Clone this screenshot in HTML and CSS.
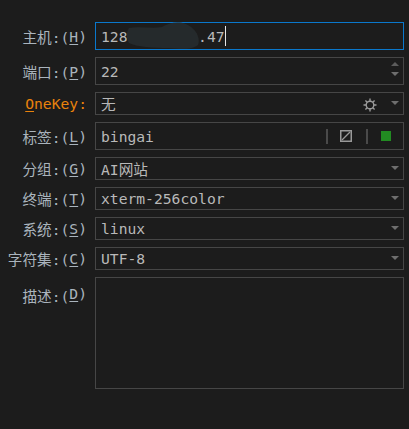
FILE: index.html
```html
<!DOCTYPE html>
<html lang="en">
<head>
    <meta charset="UTF-8">
    <meta name="viewport" content="width=device-width, initial-scale=1.0">
    <title>Session</title>
    <link rel="stylesheet" href="styles.css">
</head>
<body>
    <form class="form">
        <label class="label">主机:(<u>H</u>)</label>
        <div class="field tall focus">
            <span class="value">128.<span class="hidden-part">0000000</span>.47</span><span class="caret"></span>
            <svg class="smear" width="74" height="28" viewBox="0 0 74 28">
                <path d="M3 6 C14 4 26 7 36 5 C42 1 52 -1 60 2 C69 6 75 15 72 23 C66 28 54 27 42 26 C28 26 10 25 3 21 C0 17 0 10 3 6 Z" fill="#252a2c"/>
            </svg>
        </div>

        <label class="label">端口:(<u>P</u>)</label>
        <div class="field tall">
            <span class="value">22</span>
            <span class="spin">
                <span class="arrow up"></span>
                <span class="arrow"></span>
            </span>
        </div>

        <label class="label key"><u>O</u>neKey:</label>
        <div class="field">
            <span class="value">无</span>
            <svg class="gear" width="14" height="14" viewBox="0 0 14 14">
                <circle cx="7" cy="7" r="3.8" fill="none" stroke="#9a9a9a" stroke-width="1.4"/>
                <path d="M7 0.5V3M7 11V13.5M0.5 7H3M11 7H13.5M2.4 2.4L4.2 4.2M9.8 9.8L11.6 11.6M11.6 2.4L9.8 4.2M4.2 9.8L2.4 11.6" stroke="#9a9a9a" stroke-width="1.4"/>
            </svg>
            <span class="arrow"></span>
        </div>

        <label class="label">标签:(<u>L</u>)</label>
        <div class="field tall">
            <span class="value">bingai</span>
            <span class="sep first"></span>
            <svg class="clear" width="12" height="12" viewBox="0 0 12 12">
                <rect x="0.75" y="0.75" width="10.5" height="10.5" fill="none" stroke="#999" stroke-width="1.5"/>
                <path d="M2 10L10 2" stroke="#999" stroke-width="1.3"/>
            </svg>
            <span class="sep"></span>
            <span class="swatch"></span>
        </div>

        <label class="label">分组:(<u>G</u>)</label>
        <div class="field">
            <span class="value">AI网站</span>
            <span class="arrow"></span>
        </div>

        <label class="label">终端:(<u>T</u>)</label>
        <div class="field">
            <span class="value">xterm-256color</span>
            <span class="arrow"></span>
        </div>

        <label class="label">系统:(<u>S</u>)</label>
        <div class="field">
            <span class="value">linux</span>
            <span class="arrow"></span>
        </div>

        <label class="label">字符集:(<u>C</u>)</label>
        <div class="field">
            <span class="value">UTF-8</span>
            <span class="arrow"></span>
        </div>

        <label class="label desc">描述:(<u>D</u>)</label>
        <div class="field area"></div>
    </form>
</body>
</html>
```

FILE: styles.css
```css
body {
    margin: 0;
    background-color: #1c1c1c;
    font-family: "DejaVu Sans Mono", "Noto Sans CJK SC", monospace;
    font-size: 14.67px;
    color: #b9b9b9;
}
.form {
    display: grid;
    grid-template-columns: 87px 309px;
    column-gap: 8px;
    row-gap: 7px;
    padding-top: 22px;
}
.label {
    display: flex;
    align-items: center;
    justify-content: flex-end;
    white-space: pre;
    color: #aab4bd;
}
.label u {
    text-underline-offset: 2px;
}
.key {
    color: #e8820c;
}
.desc {
    align-items: flex-start;
    padding-top: 8px;
}
.field {
    position: relative;
    box-sizing: border-box;
    height: 23px;
    display: flex;
    align-items: center;
    padding: 0 4px 0 5px;
    border: 1px solid #464646;
}
.tall {
    height: 28px;
}
.focus {
    border-color: #0a78cc;
}
.area {
    height: 112px;
}
.value {
    flex: 1;
    white-space: nowrap;
}
.focus .value {
    flex: none;
}
.hidden-part {
    color: #252a2c;
}
.caret {
    width: 1px;
    height: 20px;
    background: #e6e6e6;
}
.smear {
    position: absolute;
    left: 30px;
    top: -1px;
}
.arrow {
    width: 0;
    height: 0;
    margin-bottom: 2px;
    border-left: 4px solid transparent;
    border-right: 4px solid transparent;
    border-top: 4px solid #6e6e6e;
}
.arrow.up {
    border-top: 0;
    border-bottom: 4px solid #5c5c5c;
}
.spin {
    display: flex;
    flex-direction: column;
    gap: 6px;
    margin-bottom: 4px;
}
.spin .arrow {
    margin-bottom: 0;
}
.gear {
    margin: 3px 14px 0 0;
}
.sep {
    width: 2px;
    height: 15px;
    background: #4a4a4a;
}
.clear {
    margin: 0 14px 0 12px;
}
.swatch {
    width: 10px;
    height: 10px;
    margin: 0 8px 0 13px;
    background: #228b22;
}
```
